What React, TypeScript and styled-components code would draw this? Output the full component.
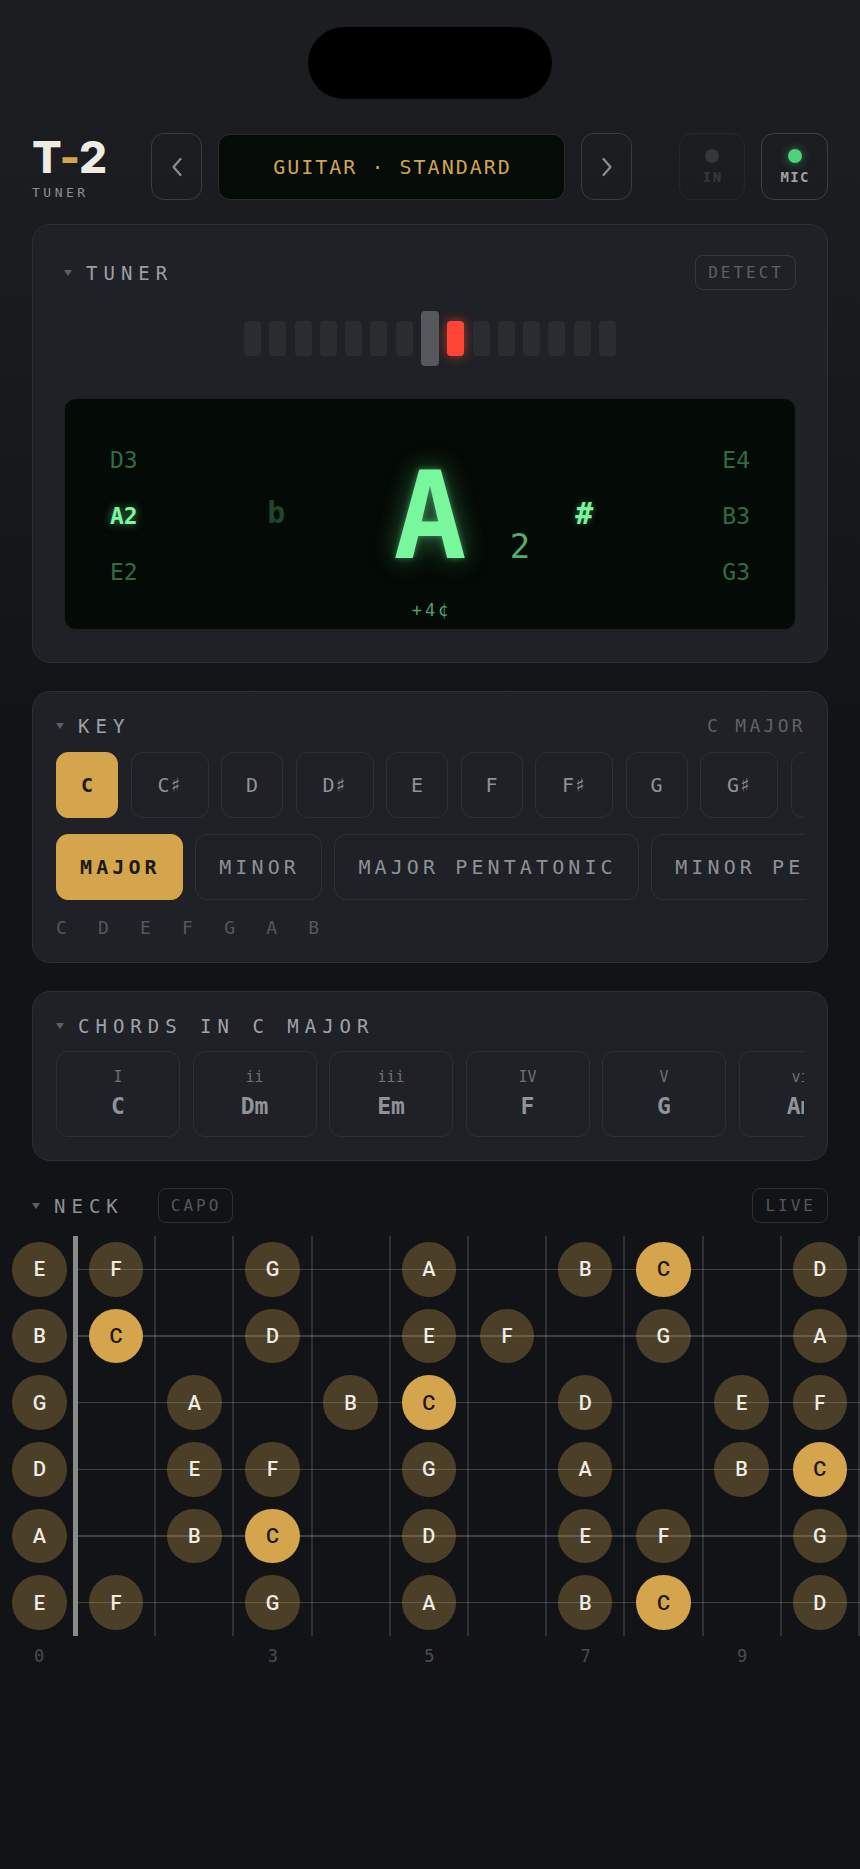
import React from 'react';
import styled, { createGlobalStyle, css } from 'styled-components';

const MONO = `"DejaVu Sans Mono", "Liberation Mono", monospace`;
const SANS = `Inter, "Noto Sans", sans-serif`;
const GOLD = '#d4a54c';

const GlobalStyle = createGlobalStyle`
  html, body { margin: 0; padding: 0; }
  body { background: #121317; width: 860px; min-height: 1869px; }
  * { box-sizing: border-box; }
`;

const Page = styled.div`
  width: 860px;
  min-height: 1869px;
  padding-top: 27px;
  overflow: hidden;
  font-family: ${MONO};
  background: linear-gradient(180deg, #1c1d21 0px, #1b1c20 230px, #141519 640px, #121317 760px, #121317 100%);
`;

const Notch = styled.div`
  width: 244px;
  height: 72px;
  margin: 0 auto 34px;
  background: #000;
  border-radius: 36px;
`;

/* ---------- header ---------- */
const Header = styled.header`
  display: flex;
  align-items: center;
  gap: 16px;
  height: 67px;
  padding: 0 32px;
`;

const Logo = styled.div`
  width: 103px;
  display: flex;
  flex-direction: column;
`;

const LogoMark = styled.div`
  font-family: ${SANS};
  font-weight: 800;
  font-size: 44px;
  line-height: 1;
  color: #eeebe3;
  letter-spacing: -0.5px;
`;

const LogoDash = styled.span`
  color: ${GOLD};
`;

const LogoSub = styled.div`
  margin-top: 7px;
  font-size: 13px;
  line-height: 1;
  letter-spacing: 3.5px;
  color: #8d8f95;
`;

const NavButton = styled.button`
  flex-shrink: 0;
  width: 51px;
  height: 67px;
  display: flex;
  align-items: center;
  justify-content: center;
  padding: 0;
  background: transparent;
  border: 1.5px solid #3a3c42;
  border-radius: 13px;
`;

const PresetDisplay = styled.div`
  flex: 1;
  height: 66px;
  display: flex;
  align-items: center;
  justify-content: center;
  background: #050b06;
  border: 1.5px solid #2a2d30;
  border-radius: 12px;
  color: ${GOLD};
  font-size: 20px;
  letter-spacing: 2px;
  padding-left: 2px;
`;

const StatusGroup = styled.div`
  display: flex;
  gap: 16px;
  margin-left: 31px;
`;

const StatusButton = styled.div<{ $active?: boolean; $w: number }>`
  width: ${p => p.$w}px;
  height: 67px;
  display: flex;
  flex-direction: column;
  align-items: center;
  justify-content: center;
  gap: 7px;
  border-radius: 13px;
  border: 1.5px solid ${p => (p.$active ? '#3d3f45' : '#25272b')};
`;

const StatusDot = styled.span<{ $active?: boolean }>`
  width: 14px;
  height: 14px;
  border-radius: 50%;
  background: ${p => (p.$active ? '#4fd27a' : '#36373b')};
  ${p => p.$active && css`box-shadow: 0 0 10px rgba(79, 210, 122, 0.55);`}
`;

const StatusText = styled.span<{ $active?: boolean }>`
  font-size: 14px;
  font-weight: 700;
  line-height: 1;
  letter-spacing: 1.4px;
  padding-left: 1.4px;
  color: ${p => (p.$active ? '#9fa1a7' : '#36373b')};
`;

/* ---------- cards ---------- */
const Card = styled.section<{ $pad: string; $mt: number }>`
  margin: ${p => p.$mt}px 32px 0;
  padding: ${p => p.$pad};
  background: #1f2126;
  border: 1px solid #2d2f34;
  border-radius: 18px;
`;

const SectionHeader = styled.div<{ $h: number; $mb: number }>`
  display: flex;
  align-items: center;
  justify-content: space-between;
  height: ${p => p.$h}px;
  margin-bottom: ${p => p.$mb}px;
`;

const SectionTitle = styled.div<{ $color?: string }>`
  display: flex;
  align-items: center;
  gap: 14px;
  font-size: 19px;
  line-height: 24px;
  letter-spacing: 6px;
  color: ${p => p.$color || '#9c9ea4'};
`;

const Caret = styled.span`
  width: 0;
  height: 0;
  border-left: 4px solid transparent;
  border-right: 4px solid transparent;
  border-top: 6px solid #5d5f65;
`;

const TagButton = styled.button<{ $tone?: 'card' | 'page' }>`
  height: 35px;
  padding: 0 11px 0 12px;
  background: transparent;
  border-radius: 8px;
  border: 1px solid ${p => (p.$tone === 'page' ? '#2e3034' : '#36383d')};
  font-family: ${MONO};
  font-size: 16px;
  letter-spacing: 3px;
  color: ${p => (p.$tone === 'page' ? '#55575c' : '#5e6066')};
`;

const HeaderValue = styled.div`
  font-size: 18px;
  line-height: 24px;
  letter-spacing: 3.3px;
  margin-right: -2px;
  color: #5f6167;
`;

/* ---------- tuner ---------- */
const Meter = styled.div`
  margin-top: 21px;
  height: 55px;
  display: flex;
  align-items: center;
  justify-content: center;
  gap: 8.3px;
`;

const MeterBar = styled.span<{ $kind: 'off' | 'center' | 'hit' }>`
  width: ${p => (p.$kind === 'center' ? 18 : 17)}px;
  height: ${p => (p.$kind === 'center' ? 55 : 35)}px;
  border-radius: 4px;
  background: ${p => (p.$kind === 'center' ? '#57585c' : p.$kind === 'hit' ? '#ff4636' : '#2a2c30')};
  ${p => p.$kind === 'hit' && css`box-shadow: 0 0 12px rgba(255, 70, 50, 0.65);`}
`;

const Display = styled.div`
  margin-top: 32px;
  height: 232px;
  padding: 33px 45px 12px;
  display: flex;
  flex-direction: column;
  background: #040a05;
  border: 1px solid #1a1f1b;
  border-radius: 12px;
`;

const DisplayMain = styled.div`
  height: 168px;
  display: flex;
`;

const StringCol = styled.div<{ $align: 'left' | 'right' }>`
  width: 28px;
  display: flex;
  flex-direction: column;
  text-align: ${p => p.$align};
`;

const StringName = styled.div<{ $active?: boolean }>`
  height: 56px;
  line-height: 56px;
  font-size: 23px;
  white-space: nowrap;
  font-weight: ${p => (p.$active ? 700 : 400)};
  color: ${p => (p.$active ? '#7cf8a0' : '#2f6c45')};
  ${p => p.$active && css`text-shadow: 0 0 8px rgba(120, 247, 156, 0.6);`}
`;

const NoteArea = styled.div`
  flex: 1;
  display: grid;
  grid-template-columns: 1fr auto 1fr;
  align-items: center;
`;

const accidental = css`
  font-weight: 700;
  font-size: 30px;
  line-height: 1;
`;

const FlatSign = styled.div`
  ${accidental};
  justify-self: end;
  margin: -6px 108px 0 0;
  color: #1d472b;
`;

const BigNote = styled.div`
  font-size: 122px;
  font-weight: 700;
  line-height: 1;
  color: #78f79c;
  text-shadow: 0 0 6px rgba(110, 240, 150, 0.45), 0 0 26px rgba(110, 240, 150, 0.4);
`;

const NoteRight = styled.div`
  display: flex;
  align-items: center;
`;

const Octave = styled.div`
  margin: 60px 0 0 43px;
  font-size: 34px;
  line-height: 1;
  color: #52ad70;
`;

const SharpSign = styled.div`
  ${accidental};
  margin: -4px 0 0 45px;
  color: #7af59c;
  text-shadow: 0 0 6px rgba(120, 245, 156, 0.4);
`;

const Cents = styled.div`
  height: 20px;
  line-height: 20px;
  text-align: center;
  font-size: 17px;
  letter-spacing: 3px;
  padding-left: 3px;
  color: #4fa06a;
`;

/* ---------- key ---------- */
const ChipRow = styled.div<{ $mb?: number }>`
  display: flex;
  gap: 12.5px;
  overflow: hidden;
  margin-bottom: ${p => p.$mb || 0}px;
`;

const chipBase = css<{ $on?: boolean }>`
  flex-shrink: 0;
  height: 66px;
  display: flex;
  align-items: center;
  justify-content: center;
  border-radius: 12px;
  font-size: 20px;
  white-space: nowrap;
  border: 1.5px solid ${p => (p.$on ? GOLD : '#2f3136')};
  background: ${p => (p.$on ? GOLD : 'transparent')};
  color: ${p => (p.$on ? '#1c1a14' : '#8f9197')};
  font-weight: ${p => (p.$on ? 700 : 400)};
`;

const KeyChip = styled.div<{ $on?: boolean; $wide?: boolean }>`
  ${chipBase};
  width: ${p => (p.$wide ? 78 : 62)}px;
`;

const ScaleChip = styled.div<{ $on?: boolean }>`
  ${chipBase};
  padding: 0 21px 0 23px;
  letter-spacing: 4.1px;
`;

const ScaleNotes = styled.div`
  margin-top: 18px;
  display: flex;
  gap: 31.2px;
  font-size: 18px;
  line-height: 20px;
  color: #55575c;
`;

/* ---------- chords ---------- */
const ChordCard = styled.div`
  flex-shrink: 0;
  width: 124px;
  height: 86px;
  display: flex;
  flex-direction: column;
  align-items: center;
  justify-content: center;
  gap: 6px;
  border: 1.5px solid #2d2f34;
  border-radius: 12px;
`;

const ChordDegree = styled.div`
  font-size: 15px;
  line-height: 18px;
  color: #6e7076;
  white-space: nowrap;
`;

const ChordName = styled.div`
  font-size: 23px;
  font-weight: 700;
  line-height: 28px;
  color: #909298;
  white-space: nowrap;
`;

/* ---------- neck ---------- */
const NeckHeader = styled.div`
  margin: 27px 32px 13px;
  height: 35px;
  display: flex;
  align-items: center;
`;

const CapoSlot = styled.div`
  margin-left: 34px;
`;

const LiveSlot = styled.div`
  margin-left: auto;
`;

const COLS = `55px 11px repeat(12, 78.2px)`;

const Fretboard = styled.div`
  display: grid;
  grid-template-columns: ${COLS};
  grid-template-rows: repeat(6, 66.67px);
  padding-left: 12px;
  width: 860px;
  overflow: hidden;
`;

const Nut = styled.div`
  grid-column: 2;
  grid-row: 1 / span 6;
  justify-self: end;
  width: 5px;
  background: #8a8a88;
`;

const OpenCell = styled.div`
  display: flex;
  align-items: center;
  justify-content: center;
`;

const FretCell = styled.div`
  display: flex;
  align-items: center;
  justify-content: center;
  border-right: 2px solid rgba(255, 255, 255, 0.13);
  background: linear-gradient(
    to bottom,
    transparent calc(50% - 1px),
    rgba(255, 255, 255, 0.19) calc(50% - 1px),
    rgba(255, 255, 255, 0.19) calc(50% + 1px),
    transparent calc(50% + 1px)
  );
`;

const NoteDot = styled.div<{ $root?: boolean }>`
  width: 54.5px;
  height: 54.5px;
  border-radius: 50%;
  display: flex;
  align-items: center;
  justify-content: center;
  font-family: Roboto, Inter, sans-serif;
  font-weight: 500;
  font-size: 20px;
  background: ${p => (p.$root ? GOLD : 'rgba(212, 165, 76, 0.3)')};
  color: ${p => (p.$root ? '#1a1712' : '#f0ede6')};
`;

const FretNumbers = styled.div`
  display: grid;
  grid-template-columns: ${COLS};
  padding-left: 12px;
  margin-top: 10px;
  width: 860px;
  overflow: hidden;
`;

const FretNumber = styled.div`
  text-align: center;
  font-size: 17px;
  line-height: 20px;
  color: #4a4c51;
  padding-right: 1px;
`;

/* ---------- data ---------- */
const NAMES = ['C', 'C♯', 'D', 'D♯', 'E', 'F', 'F♯', 'G', 'G♯', 'A', 'A♯', 'B'];
const SCALE = [0, 2, 4, 5, 7, 9, 11];
const OPEN = [4, 11, 7, 2, 9, 4];
const FRETS = Array.from({ length: 12 }, (_, i) => i + 1);
const MARKED = [3, 5, 7, 9, 12];

const SCALES = ['MAJOR', 'MINOR', 'MAJOR PENTATONIC', 'MINOR PENTATONIC', 'BLUES'];
const CHORDS: [string, string][] = [
  ['I', 'C'],
  ['ii', 'Dm'],
  ['iii', 'Em'],
  ['IV', 'F'],
  ['V', 'G'],
  ['vi', 'Am'],
  ['vii°', 'Bdim'],
];

const Chevron = ({ dir }: { dir: 'left' | 'right' }) => (
  <svg width="12" height="20" viewBox="0 0 12 20" fill="none">
    <polyline
      points={dir === 'left' ? '9.5,2 2.5,10 9.5,18' : '2.5,2 9.5,10 2.5,18'}
      stroke="#8b8d93"
      strokeWidth="2.2"
      strokeLinecap="round"
      strokeLinejoin="round"
    />
  </svg>
);

const Dot = ({ n }: { n: number }) =>
  SCALE.includes(n % 12) ? <NoteDot $root={n % 12 === 0}>{NAMES[n % 12]}</NoteDot> : null;

export default function App() {
  return (
    <>
      <GlobalStyle />
      <Page>
        <Notch />

        <Header>
          <Logo>
            <LogoMark>
              T<LogoDash>-</LogoDash>2
            </LogoMark>
            <LogoSub>TUNER</LogoSub>
          </Logo>
          <NavButton aria-label="previous">
            <Chevron dir="left" />
          </NavButton>
          <PresetDisplay>GUITAR · STANDARD</PresetDisplay>
          <NavButton aria-label="next">
            <Chevron dir="right" />
          </NavButton>
          <StatusGroup>
            <StatusButton $w={66}>
              <StatusDot />
              <StatusText>IN</StatusText>
            </StatusButton>
            <StatusButton $w={67} $active>
              <StatusDot $active />
              <StatusText $active>MIC</StatusText>
            </StatusButton>
          </StatusGroup>
        </Header>

        <Card $mt={24} $pad="30px 31px 32px">
          <SectionHeader $h={35} $mb={0}>
            <SectionTitle>
              <Caret />
              TUNER
            </SectionTitle>
            <TagButton>DETECT</TagButton>
          </SectionHeader>
          <Meter>
            {Array.from({ length: 15 }, (_, i) => (
              <MeterBar key={i} $kind={i === 7 ? 'center' : i === 8 ? 'hit' : 'off'} />
            ))}
          </Meter>
          <Display>
            <DisplayMain>
              <StringCol $align="left">
                <StringName>D3</StringName>
                <StringName $active>A2</StringName>
                <StringName>E2</StringName>
              </StringCol>
              <NoteArea>
                <FlatSign>b</FlatSign>
                <BigNote>A</BigNote>
                <NoteRight>
                  <Octave>2</Octave>
                  <SharpSign>#</SharpSign>
                </NoteRight>
              </NoteArea>
              <StringCol $align="right">
                <StringName>E4</StringName>
                <StringName>B3</StringName>
                <StringName>G3</StringName>
              </StringCol>
            </DisplayMain>
            <Cents>+4¢</Cents>
          </Display>
        </Card>

        <Card $mt={28} $pad="22px 23px 24px">
          <SectionHeader $h={24} $mb={14}>
            <SectionTitle $color="#a0a2a8">
              <Caret />
              KEY
            </SectionTitle>
            <HeaderValue>C MAJOR</HeaderValue>
          </SectionHeader>
          <ChipRow $mb={16}>
            {NAMES.map((n, i) => (
              <KeyChip key={n} $on={i === 0} $wide={n.length > 1}>
                {n}
              </KeyChip>
            ))}
          </ChipRow>
          <ChipRow>
            {SCALES.map((s, i) => (
              <ScaleChip key={s} $on={i === 0}>
                {s}
              </ScaleChip>
            ))}
          </ChipRow>
          <ScaleNotes>
            {SCALE.map(n => (
              <span key={n}>{NAMES[n]}</span>
            ))}
          </ScaleNotes>
        </Card>

        <Card $mt={28} $pad="22px 23px 23px">
          <SectionHeader $h={24} $mb={13}>
            <SectionTitle $color="#a0a2a8">
              <Caret />
              CHORDS IN C MAJOR
            </SectionTitle>
          </SectionHeader>
          <ChipRow>
            {CHORDS.map(([deg, name]) => (
              <ChordCard key={deg}>
                <ChordDegree>{deg}</ChordDegree>
                <ChordName>{name}</ChordName>
              </ChordCard>
            ))}
          </ChipRow>
        </Card>

        <NeckHeader>
          <SectionTitle $color="#8e9096">
            <Caret />
            NECK
          </SectionTitle>
          <CapoSlot>
            <TagButton $tone="page">CAPO</TagButton>
          </CapoSlot>
          <LiveSlot>
            <TagButton $tone="page">LIVE</TagButton>
          </LiveSlot>
        </NeckHeader>

        <Fretboard>
          <Nut />
          {OPEN.map((open, s) => (
            <React.Fragment key={s}>
              <OpenCell>
                <Dot n={open} />
              </OpenCell>
              {FRETS.map(f => (
                <FretCell key={f}>
                  <Dot n={open + f} />
                </FretCell>
              ))}
            </React.Fragment>
          ))}
        </Fretboard>

        <FretNumbers>
          <FretNumber>0</FretNumber>
          <span />
          {FRETS.map(f => (
            <FretNumber key={f}>{MARKED.includes(f) ? f : ''}</FretNumber>
          ))}
        </FretNumbers>
      </Page>
    </>
  );
}
